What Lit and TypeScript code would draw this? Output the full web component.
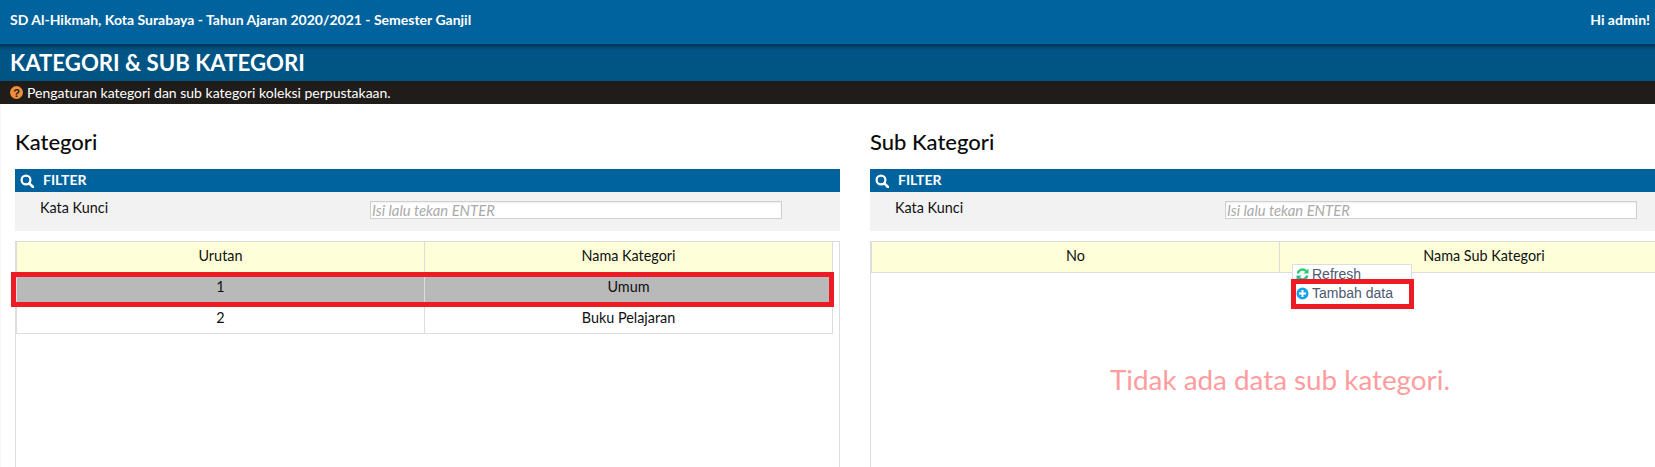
import { LitElement, html, css, svg } from "lit";
import { customElement } from "lit/decorators.js";

const searchIcon = svg`<svg class="search" viewBox="0 0 14 14" width="14" height="14"><circle cx="6" cy="6" r="4.4" fill="none" stroke="#fff" stroke-width="2.2"/><path d="M9.3 9.3L13 13" stroke="#fff" stroke-width="2.6" stroke-linecap="round"/></svg>`;

@customElement("filter-box")
class FilterBox extends LitElement {
  static styles = css`
    :host { display: block; }
    .bar { height: 23px; background: #01639e; color: #fff; font: 700 14px/21px Lato, sans-serif; display: flex; align-items: center; padding: 0 0 2px 5px; box-sizing: border-box; gap: 9px; }
    .bar svg { margin-top: 2px; }
    .body { height: 39px; background: #f2f2f2; display: flex; align-items: flex-start; padding: 7px 0 0 25px; box-sizing: border-box; }
    .label { font: 14.4px/17px Lato, sans-serif; color: #111; width: 330px; }
    .input { margin-top: 2px; width: 412px; height: 18px; box-sizing: border-box; border: 1px solid #d0d0d0; background: #fff; box-shadow: inset 0 1px 2px rgba(0,0,0,.07); color: #aaa; font: italic 14.8px/16px Lato, sans-serif; padding-left: 1px; white-space: nowrap; }
  `;
  render() {
    return html`<div class="bar">${searchIcon}<span>FILTER</span></div>
      <div class="body"><div class="label">Kata Kunci</div><div class="input">Isi lalu tekan ENTER</div></div>`;
  }
}

@customElement("app-root")
class AppRoot extends LitElement {
  static styles = css`
    :host { display: block; width: 1655px; height: 467px; overflow: hidden; background: #fff; font-family: Lato, sans-serif; }
    .top { height: 44px; background: #01639e; color: #fff; display: flex; justify-content: space-between; font: 700 14px/39px Lato, sans-serif; padding: 0 5px 0 10px; box-sizing: border-box; }
    .title { height: 37px; background: linear-gradient(#01304f 0, #014670 3px, #015585 6px, #015585 100%); color: #fff; font: 700 22.2px/37px Lato, sans-serif; padding-left: 10px; }
    .note { height: 23px; background: #201c19; color: #fff; font: 14px/23px Lato, sans-serif; display: flex; align-items: center; padding-left: 10px; gap: 4px; }
    .main { display: flex; height: 363px; padding-left: 14px; gap: 30px; border-left: 1px solid #f6f6f6; }
    .panel { flex: none; width: 825px; display: flex; flex-direction: column; }
    h2 { margin: 0; font: 500 22px/24px Lato, sans-serif; color: #0a0a0a; padding: 26px 0 15px 0; height: 24px; }
    .tbl { margin-top: 10px; flex: 1; border: 1px solid #ddd; border-bottom: 0; position: relative; overflow: visible; }
    .row { display: grid; grid-template-columns: 409px 408px; width: 817px; box-sizing: border-box; }
    .r .row { grid-template-columns: 409px 409px; width: 818px; }
    .r .rows { width: 823px; overflow: hidden; }
    .cell { text-align: center; border-right: 1px solid #ddd; border-bottom: 1px solid #ddd; font: 14.4px/29px Lato, sans-serif; color: #111; box-sizing: border-box; height: 30.67px; }
    .cell:first-child { border-left: 1px solid #ddd; }
    .head .cell { background: #feffd8; line-height: 28px; }
    .sel .cell { background: #b9b9b9; line-height: 28px; }
    .hl { position: absolute; border: 5px solid #ed1c24; box-sizing: border-box; pointer-events: none; }
    .hl1 { left: -5px; top: 30px; width: 823px; height: 35px; }
    .empty { position: absolute; left: 0; width: 818px; top: 122px; text-align: center; font: 400 27.8px/32px Lato, sans-serif; color: #ff9c9e; }
    .menu { position: absolute; left: 421px; top: 22px; width: 120px; height: 44px; background: #fff; border: 1px solid #ddd; box-sizing: border-box; font: 14px/17px "Liberation Sans", sans-serif; color: #4a5a70; }
    .mi { display: flex; align-items: center; gap: 3px; height: 18px; padding-left: 3px; }
    .mi + .mi { margin-top: 1px; }
    .hl2 { left: 420px; top: 37px; width: 123px; height: 30px; }
  `;
  render() {
    return html`
      <div class="top"><span>SD Al-Hikmah, Kota Surabaya - Tahun Ajaran 2020/2021 - Semester Ganjil</span><span>Hi admin!</span></div>
      <div class="title">KATEGORI &amp; SUB KATEGORI</div>
      <div class="note">
        <svg width="13" height="13" viewBox="0 0 13 13"><circle cx="6.5" cy="6.5" r="6.5" fill="#ee8e3a"/><text x="6.5" y="10.5" text-anchor="middle" font-family="Liberation Sans" font-weight="700" font-size="11" fill="#201c19">?</text></svg>
        <span>Pengaturan kategori dan sub kategori koleksi perpustakaan.</span>
      </div>
      <div class="main">
        <div class="panel">
          <h2>Kategori</h2>
          <filter-box></filter-box>
          <div class="tbl">
            <div class="row head"><div class="cell">Urutan</div><div class="cell">Nama Kategori</div></div>
            <div class="row sel"><div class="cell">1</div><div class="cell">Umum</div></div>
            <div class="row"><div class="cell">2</div><div class="cell">Buku Pelajaran</div></div>
            <div class="hl hl1"></div>
          </div>
        </div>
        <div class="panel r">
          <h2>Sub Kategori</h2>
          <filter-box></filter-box>
          <div class="tbl">
            <div class="rows"><div class="row head"><div class="cell">No</div><div class="cell">Nama Sub Kategori</div></div></div>
            <div class="menu">
              <div class="mi"><svg width="13" height="13" viewBox="0 0 13 13"><path d="M1.8 5.5A4.8 4.8 0 0 1 10.3 3.4" fill="none" stroke="#2ecc71" stroke-width="2.4"/><path d="M11.2 7.5A4.8 4.8 0 0 1 2.7 9.6" fill="none" stroke="#1fc49a" stroke-width="2.4"/><path d="M12.5 .6v5h-5z" fill="#2ecc71"/><path d="M.5 12.4v-5h5z" fill="#1fc49a"/></svg><span>Refresh</span></div>
              <div class="mi"><svg width="13" height="13" viewBox="0 0 13 13"><circle cx="6.5" cy="6.5" r="6" fill="#1aa3e8"/><path d="M6.5 3v7M3 6.5h7" stroke="#fff" stroke-width="2"/></svg><span>Tambah data</span></div>
            </div>
            <div class="hl hl2"></div>
            <div class="empty">Tidak ada data sub kategori.</div>
          </div>
        </div>
      </div>`;
  }
}
